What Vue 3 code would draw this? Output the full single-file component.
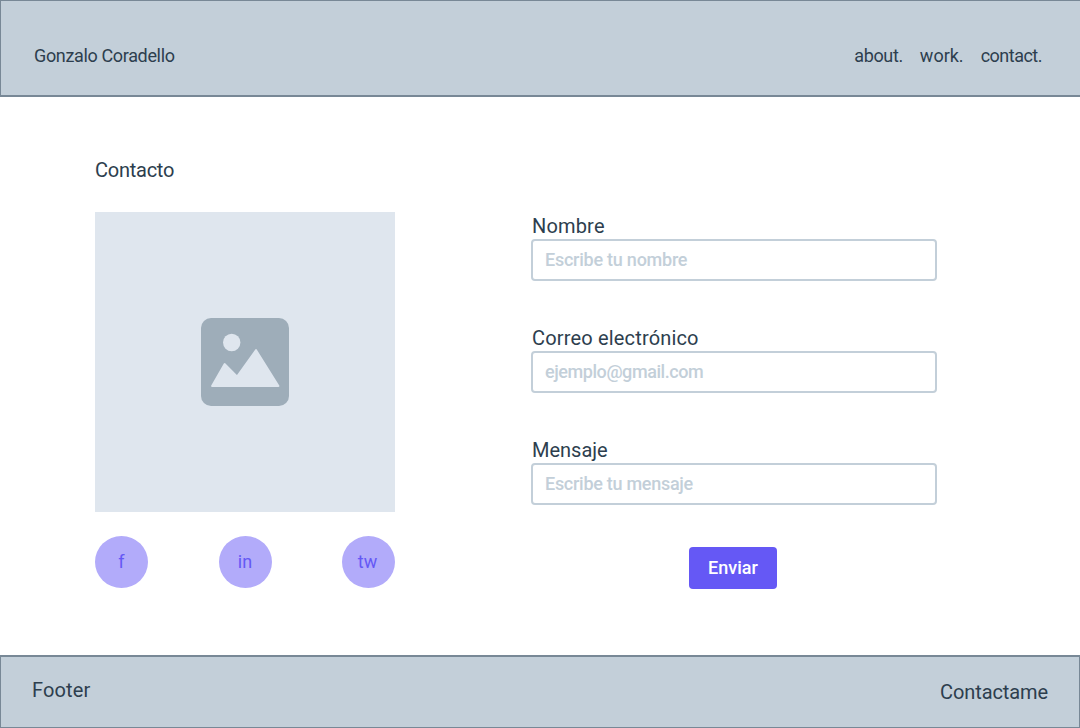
<script setup>
const nav = [
  { label: 'about.', cls: 'about' },
  { label: 'work.', cls: 'work' },
  { label: 'contact.', cls: 'contact' },
]
const socials = ['f', 'in', 'tw']
const fields = [
  { id: 'nombre', label: 'Nombre', hint: 'Escribe tu nombre' },
  { id: 'correo', label: 'Correo electrónico', hint: 'ejemplo@gmail.com' },
  { id: 'mensaje', label: 'Mensaje', hint: 'Escribe tu mensaje' },
]
</script>

<template>
  <div class="page">
    <header class="header">
      <span class="brand">Gonzalo Coradello</span>
      <nav class="nav">
        <a v-for="n in nav" :key="n.cls" :class="n.cls">{{ n.label }}</a>
      </nav>
    </header>

    <main class="main">
      <section class="left">
        <h1 class="title">Contacto</h1>
        <div class="image">
          <svg width="88" height="88" viewBox="0 0 88 88">
            <rect width="88" height="88" rx="10" fill="#9eadb9" />
            <circle cx="30.7" cy="24.5" r="8.7" fill="#dfe6ee" />
            <path
              d="M11 68 L23.6 46 L36 58.500 L55 32 L77.500 68 Z"
              fill="#dfe6ee"
              stroke="#dfe6ee"
              stroke-width="1.800"
              stroke-linejoin="round"
            />
          </svg>
        </div>
        <div class="socials">
          <a v-for="s in socials" :key="s" :class="['social', s]">{{ s }}</a>
        </div>
      </section>

      <form class="form" @submit.prevent>
        <div v-for="f in fields" :key="f.id" class="field">
          <label :for="f.id" :class="['label', f.id]">{{ f.label }}</label>
          <input :id="f.id" :class="['input', f.id]" type="text" :placeholder="f.hint" />
        </div>
        <button class="send">Enviar</button>
      </form>
    </main>

    <footer class="footer">
      <span class="foot-left">Footer</span>
      <span class="foot-right">Contactame</span>
    </footer>
  </div>
</template>

<style>
body {
  background: #fff;
}
</style>

<style scoped>
.page {
  display: flex;
  flex-direction: column;
  width: 1080px;
  height: 728px;
  overflow: hidden;
  font-family: Roboto, "Liberation Sans", sans-serif;
  font-size: 20px;
  line-height: 24px;
  color: #2d3e4e;
  white-space: nowrap;
}
.header {
  box-sizing: border-box;
  height: 97px;
  flex: none;
  display: flex;
  justify-content: space-between;
  padding: 43px 38px 0 33px;
  background: #c3cfd9;
  border: solid #788896;
  border-width: 1px 0 2px 1px;
  font-size: 18px;
}
.brand {
  letter-spacing: -0.35px;
}
.nav {
  display: flex;
  gap: 17px;
}
.about {
  letter-spacing: -0.35px;
}
.contact {
  letter-spacing: -0.5px;
}
.main {
  flex: 1;
  display: flex;
  padding-left: 95px;
}
.left {
  width: 300px;
  padding-top: 61px;
}
.title {
  margin: 0 0 30px;
  font-size: 20px;
  font-weight: 400;
  line-height: 24px;
  letter-spacing: -0.25px;
}
.image {
  height: 300px;
  display: flex;
  align-items: center;
  justify-content: center;
  background: #dfe6ee;
}
.socials {
  display: flex;
  justify-content: space-between;
  margin-top: 24px;
}
.social {
  box-sizing: border-box;
  width: 53px;
  height: 52px;
  border-radius: 50%;
  background: #b2abfa;
  color: #6558f5;
  font-size: 18px;
  line-height: 52px;
  text-align: center;
}
.tw {
  padding-right: 2px;
}
.form {
  width: 406px;
  margin-left: 136px;
  padding-top: 117px;
  display: flex;
  flex-direction: column;
}
.field {
  height: 112px;
  display: flex;
  flex-direction: column;
}
.label {
  height: 25px;
  padding-left: 1px;
  letter-spacing: 0.17px;
}
.label.mensaje {
  letter-spacing: 0;
}
.input {
  box-sizing: border-box;
  width: 406px;
  height: 42px;
  padding: 0 12px 2px;
  border: 2px solid #c3cfd9;
  border-radius: 4px;
  background: #fff;
  font-family: inherit;
  font-size: 18px;
  font-weight: 500;
  letter-spacing: -0.24px;
}
.input.correo {
  letter-spacing: -0.43px;
}
.input.mensaje {
  letter-spacing: -0.28px;
}
.input::placeholder {
  color: #c3cfd9;
  opacity: 1;
}
.send {
  width: 88px;
  height: 42px;
  margin: -3px 0 0 158px;
  padding: 0 0 2px;
  border: 0;
  border-radius: 4px;
  background: #6558f5;
  color: #fff;
  font-family: inherit;
  font-size: 18px;
  font-weight: 500;
}
.footer {
  box-sizing: border-box;
  flex: none;
  height: 73px;
  display: flex;
  justify-content: space-between;
  padding: 21px 31px 0;
  background: #c3cfd9;
  border: 1px solid #788896;
  border-top-width: 2px;
}
.foot-left {
  letter-spacing: 0.15px;
}
.foot-right {
  margin-top: 2px;
  letter-spacing: -0.1px;
}
</style>
